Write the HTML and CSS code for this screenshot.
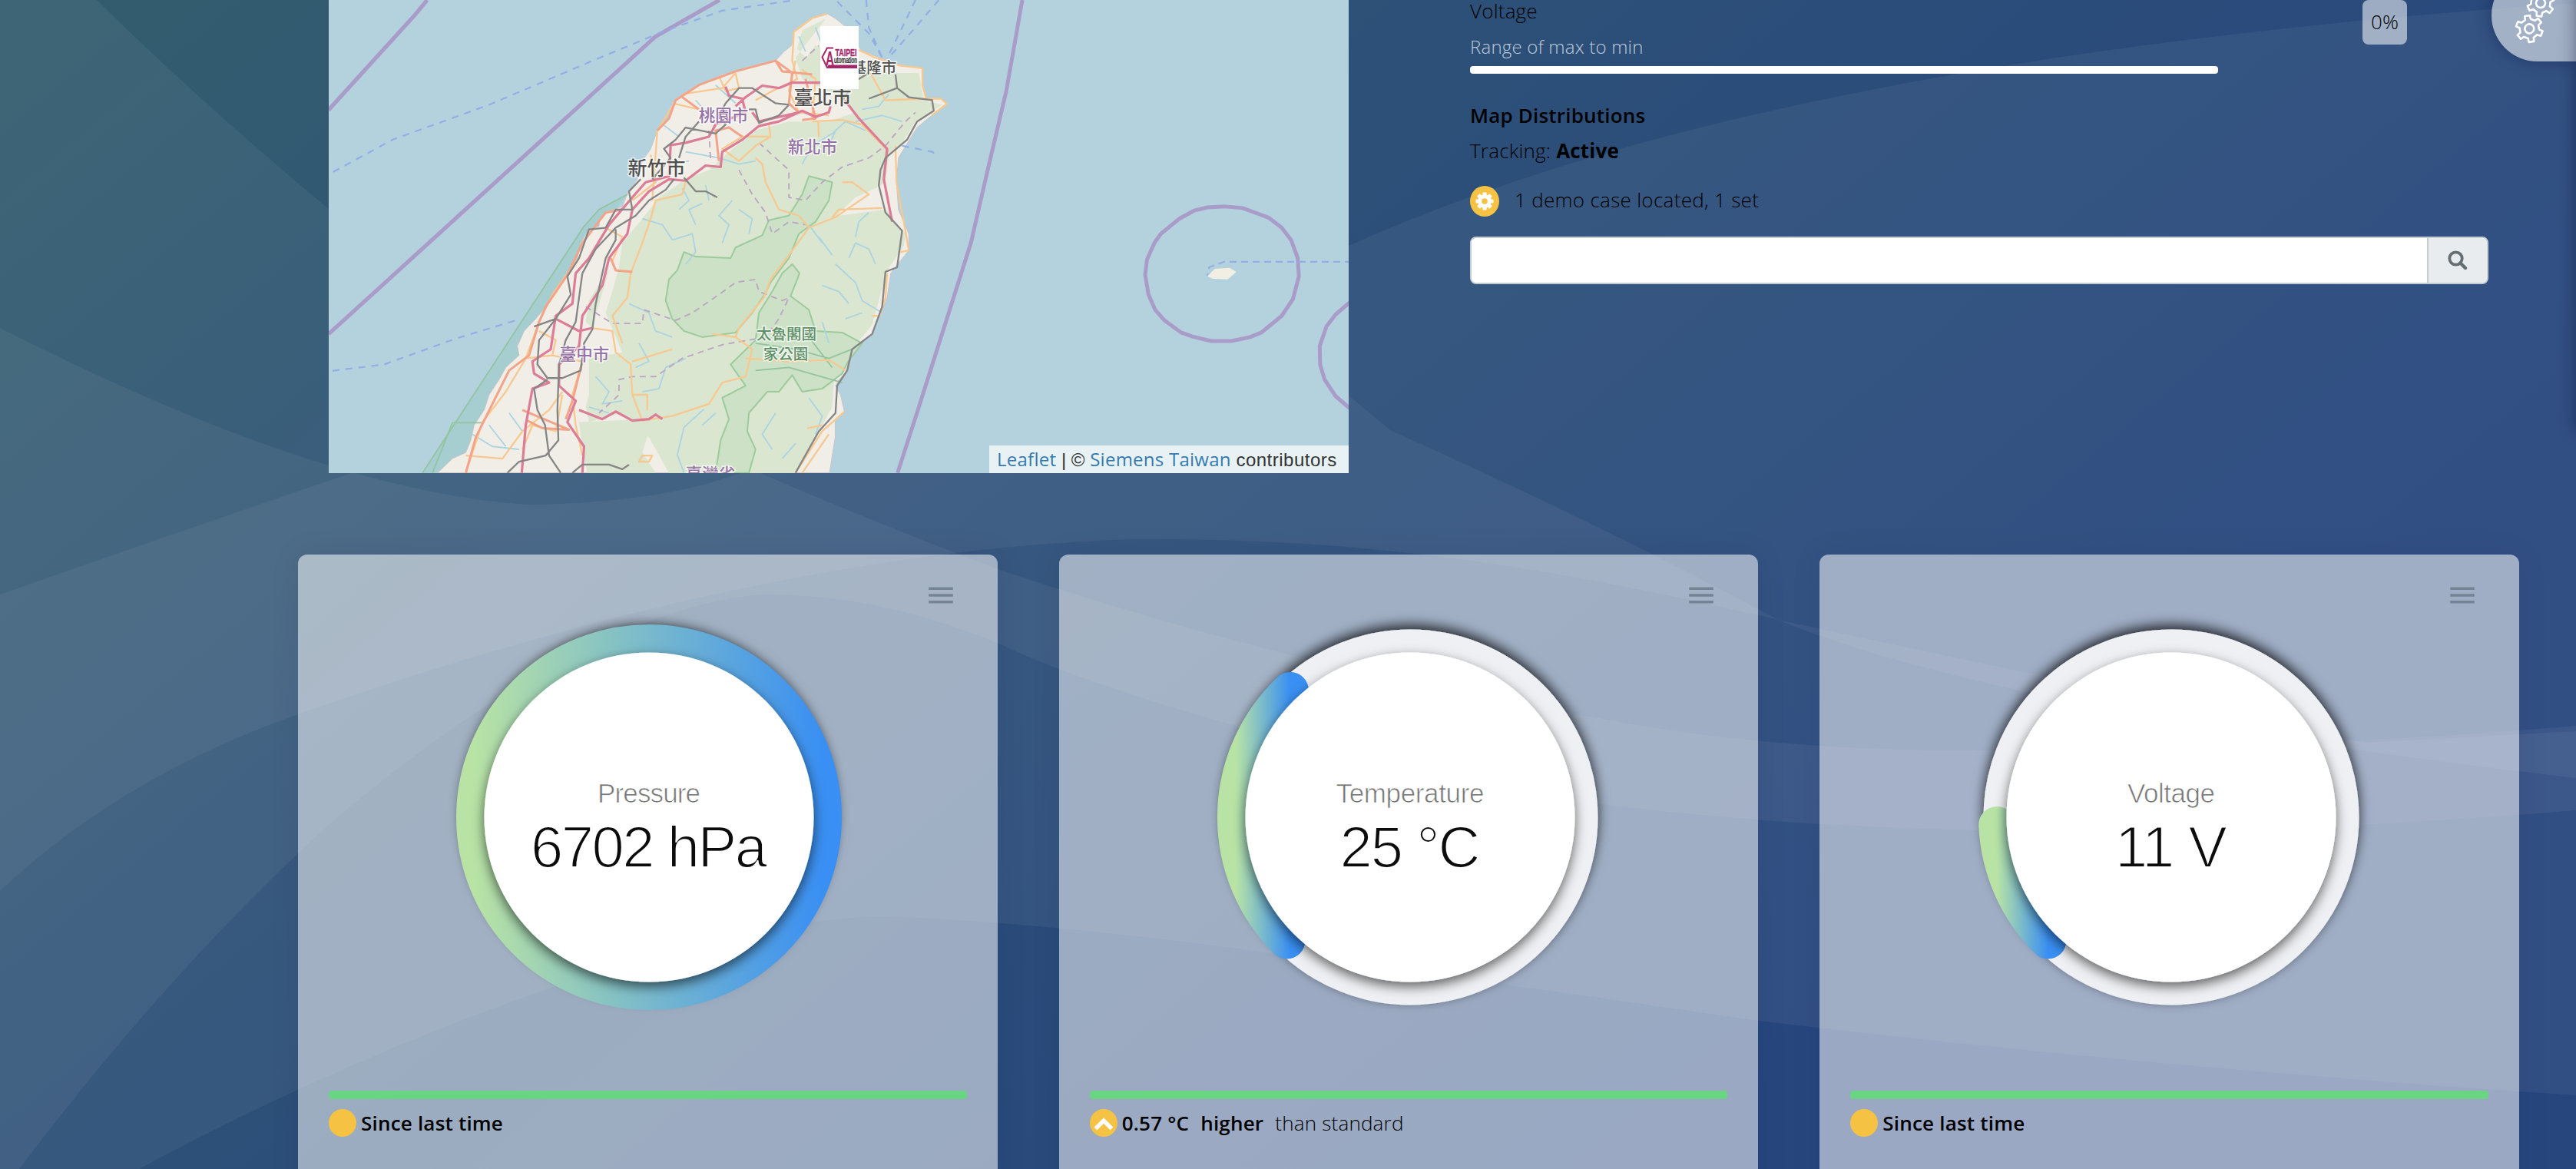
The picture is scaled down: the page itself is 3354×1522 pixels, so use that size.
FILE: index.html
```html
<!DOCTYPE html>
<html lang="en">
<head>
<meta charset="utf-8">
<title>Sensor Dashboard</title>
<link rel="stylesheet" href="styles.css">
</head>
<body>
<svg class="backdrop" viewBox="0 0 3354 1522" preserveAspectRatio="none" aria-hidden="true">
  <defs>
    <linearGradient id="bg" gradientUnits="userSpaceOnUse" x1="100" y1="0" x2="1700" y2="1920">
      <stop offset="0" stop-color="#335d6e"/><stop offset=".46" stop-color="#2d5078"/><stop offset="1" stop-color="#27467e"/>
    </linearGradient>
  </defs>
  <rect width="3354" height="1522" fill="url(#bg)"/>
  <g fill="#fff" fill-opacity=".052">
    <path d="M0 0H126Q260 132 428 272Q1000 640 1756 320Q2300 75 3354 4V1426Q2800 1390 2289 1329Q1800 1258 1654 1241Q1360 1200 1147 1193C900 1200 500 1350 181 1522H0Z"/>
    <path d="M0 427Q420 640 686 657Q860 655 963 616Q1400 380 1756 515L1810 560Q2100 690 2315 807Q2600 925 3354 1013V952L3080 967Q2640 877 2315 807C2050 745 1800 700 1484 702C1100 712 700 820 388 930Q160 1010 0 1160Z"/>
    <path d="M0 774Q240 690 428 626Q700 530 990 616Q1150 685 1305 743Q1684 870 2070 933Q2298 978 2575 977Q3000 975 3354 945V1055Q2900 1092 2579 1081Q2300 1075 2079 1046Q1800 1000 1598 942Q1400 885 1305 840Q1150 774 995 774C750 790 450 1050 388 1111Q200 1290 25 1522H0Z"/>
  </g>
</svg>

<main class="page">
  <section class="overview">
    <div class="map">
      <svg class="map-tiles" viewBox="0 0 1328 616">
        <rect width="1328" height="616" fill="#b3d2dd"/>
        <g transform="translate(-8 0) scale(.43367 .3954)" fill="none" stroke-linejoin="round" class="geo">
          <path d="M915 640L830 690L785 745L300 1557H430L600 1200L770 850Z" fill="#a6cdd0"/>
          <path fill="#f0eee6" stroke="#c9c4cc" stroke-width="1" d="M1515 45L1470 60L1415 100L1408 150L1385 170L1360 200L1240 235L1200 245L1130 280L1080 310L1050 345L1040 390L1005 430L985 490L960 530L945 590L915 640L900 680L860 695L832 720L830 745L800 755L775 800L765 850L735 905L700 950L670 1010L640 1050L605 1090L585 1140L590 1170L550 1210L530 1250L500 1300L485 1350L455 1400L445 1450L430 1490L390 1510L345 1557H1522L1539 1440L1539 1380L1567 1355L1555 1300L1540 1270L1550 1250L1578 1220L1583 1160L1650 1100L1673 1040L1695 980L1706 900L1734 860L1760 825L1760 770L1729 690L1723 600L1729 520L1751 480L1785 420L1829 380L1874 342L1857 325L1812 325L1801 280L1801 225L1729 215L1673 190L1617 165L1567 85L1539 60Z"/>
          <path fill="#dae6cf" d="M1510 62L1440 100L1425 160L1450 190L1480 150L1560 180L1620 220L1700 240L1790 240L1805 330L1860 345L1780 400L1735 480L1700 510L1690 600L1660 620L1600 650L1540 712L1690 690L1750 770L1745 810L1695 890L1650 1070L1560 1190L1535 1260L1530 1340L1500 1400L1420 1557H1040L980 1440L900 1360L800 1390L790 1340L800 1300L800 1180L900 1160L850 1030L870 960L890 880L900 800L960 720L1010 650L1090 590L1160 560L1220 500L1300 430L1400 400L1520 400L1600 370L1520 300L1440 260L1420 190Z"/>
          <path fill="#dae6cf" d="M770 1390L960 1380L980 1420L960 1490L1000 1557H795L780 1470ZM860 890L830 1000L810 1080L790 1060L800 990L850 900Z"/>
          <path fill="#cde1c6" stroke="#9ccb9b" stroke-width="2" d="M1085 830L1120 845L1225 850L1240 815L1320 775L1340 725L1400 710L1440 640L1460 580L1530 600L1520 660L1480 730L1430 770L1400 850L1345 930L1330 965L1290 1030L1240 1095L1140 1110L1085 1090L1050 1050L1030 990L1040 920L1065 890Z"/>
          <path fill="#cde1c6" stroke="#9ccb9b" stroke-width="2" d="M1410 870L1432 900L1405 975L1460 1020L1480 1090L1560 1095L1620 1130L1578 1190L1560 1230L1500 1280L1440 1290L1410 1235L1370 1290L1335 1290L1280 1360L1275 1420L1300 1480L1280 1557H1180L1195 1450L1220 1380L1200 1310L1270 1270L1225 1200L1300 1120L1310 1030L1350 960L1380 900Z"/>
          <path stroke="#93c4a0" stroke-width="1.8" d="M915 640L830 690L785 745L300 1557M330 1557L390 1392H480M1300 1220L1400 1210L1560 1260M1300 1130L1420 1150L1520 1180L1590 1150M1460 1110L1530 1210"/>
          <path stroke="#abd4e2" stroke-width="1.8" d="M960 720l60 20l30 50l60-20l10 60l-30 40M1120 740l-20-50l40-20M1200 800l20-60l-30-30l40-50M1250 690l40 30l-10 50M920 1000l60 30l20 60l50 20M950 1130l30 60l-40 20M1090 1180l-60 30l-20 70l-50 10M820 1240l40 50l-20 40l60-10M800 1340l60 20M1085 1557l-20-60l20-90l60-60M1140 1400l40-40M1350 1480l-30-50l40-70M450 1430l60 40l80 10M500 1400l50 70M560 1360l40 60M1540 870l60 60l20 60l60 40M1500 940l50 20l30 40M1580 850l20-50l40 20l20 50M1490 780l40 60M1600 780l10-50l30-30M1440 540l30-60l60-40l40-40l60 30M1520 480l20-50M1600 400l80-20l60 20M1620 360l50-10l30-40M1500 800l-40-60M1090 500l100 20l60 20l50-10M1040 540l60-10M1120 330l40 50M1180 280l60 60M1430 120l20 50M1480 90l20 60M1010 400l60 50M1460 1310l40 60l-20 60M1380 1510l40-50M1080 620l20 40l-30 30M1150 610l10 50M1570 1050l50-20M1500 1060l20 70"/>
          <path stroke="#bca3c4" stroke-width="1.8" stroke-dasharray="8 6" d="M790 1010L820 1030L870 1065L960 1065L965 1020L1060 1055L1110 1030L1190 970L1240 930L1300 920L1310 960L1380 990L1400 980L1370 1050L1330 1110L1200 1135L1080 1180L1000 1240L930 1240L890 1250L890 1300L830 1360M1160 430L1165 530M1250 560L1290 640L1330 700L1350 770L1400 730L1450 740M1310 470L1350 510L1400 560L1400 650L1450 660L1500 600L1560 550L1640 520L1690 480L1750 400L1780 370M1440 200L1490 150"/>
          <g stroke="#f7c88f" stroke-width="2.300">
            <path d="M1515 45L1470 60L1415 105L1410 200L1425 260L1350 300L1300 330M1240 240L1250 290L1210 300L1190 250M1080 310L1200 290L1240 240M1567 85L1600 160L1660 190L1729 215L1801 225L1801 280L1812 325L1690 330L1650 250L1617 210M1829 380L1874 342L1857 325L1812 325M1470 400L1560 395L1620 410L1700 500M1488 400L1490 450M1340 410L1345 450L1300 480L1250 530L1200 490L1260 450L1340 450M1300 520L1320 540L1330 600L1370 690L1430 710L1460 750L1540 715L1640 640L1590 600L1560 600M1530 715L1550 690L1680 685M1720 480L1723 600L1745 730L1760 825L1734 830M1460 750L1400 840L1345 920L1325 980L1250 1080L1240 1110L1290 1150L1270 1240L1200 1260L1160 1330L1050 1370L960 1385L930 1300L925 1200L880 1160L870 1090L810 1080M1170 1100L1240 1110M930 1190L1050 1150M930 1300H975V1350M1270 1180L1400 1190L1520 1185L1570 1220M1090 600L1080 640L1000 660L985 720L960 800L925 900L915 980L870 1040L900 1130M850 750L900 780L870 860M760 860L690 970L650 1060L610 1180L550 1290L480 1390L430 1557M610 1180L690 1170L700 1120L650 1090M690 1170L780 1190L750 1300L760 1400L780 1500M430 1500L540 1510L600 1420L680 1350L720 1290M720 1300L700 1420L630 1400L600 1480M1567 1355L1500 1420L1420 1557M1455 1410L1500 1400M960 1500l30 0l-10 20l-30 0z"/>
            <path d="M1695 900L1690 980L1673 1040L1650 1040M1440 1557L1520 1430M990 660L1005 430L1050 350M985 510L1000 600L930 660M1050 340L1130 360M1420 200L1400 300L1430 370L1520 380M1440 230L1480 260L1470 390"/>
          </g>
          <path stroke="#f3a488" stroke-width="3" d="M1005 430L1040 390L1060 330L1130 280L1240 235L1360 200L1410 240L1400 340L1430 370M1360 200L1380 235L1470 245M1080 320L1130 360M1450 260L1480 390L1440 395M900 690L850 700L780 800L735 905L670 1010L650 1060L620 1170L560 1220L510 1330L460 1440L430 1557M865 850L880 890L930 895M780 1190L750 1320L730 1380M1260 450L1220 420L1180 430L1190 530M615 1385L660 1410L740 1415L600 1350"/>
          <path stroke="#dd7c97" stroke-width="3.200" d="M1495 272H1410L1370 290L1320 282L1270 320L1240 350M1210 285L1220 315L1260 325L1270 370L1180 410L1160 450L1090 470L1045 478L1040 580L970 600L930 650L860 740L800 850L760 900L750 1000L700 1040L685 1150L630 1190L635 1230L680 1260L630 1280L610 1400L598 1557M1525 350L1520 370L1480 385L1440 365L1370 400L1310 415L1260 460L1200 500L1195 550L1150 545L1090 595L1040 590L980 630L930 690L915 770L860 850L840 940L780 1040L770 1140L710 1200L710 1270L760 1320L735 1390L785 1470L780 1557M700 1050L770 1090L810 1080M770 1350L840 1380L880 1355L930 1385L980 1380L1000 1365L1020 1380M1290 370L1310 400L1430 370M1568 330L1610 390L1695 490L1685 590L1710 730"/>
          <path stroke="#858585" stroke-width="2.300" d="M1400 345L1360 340L1290 290H1250L1210 340L1190 380L1210 410L1180 440L1090 420L1060 460L1025 490L1045 520L990 590M1130 400L1090 450L1070 520M1085 585L1120 630L1150 630L1185 650M1400 345L1370 380L1310 405L1300 360L1280 360M1055 590L1030 625L980 660L940 710L880 750L820 820L780 900L760 1060L730 1120L710 1200L705 1350L708 1450L670 1500L590 1520L555 1557M955 590L920 630L930 690L880 690L850 750L800 755L770 850L735 910L745 970L700 1050L650 1120L645 1200L675 1245H720L775 1220L785 1130L810 1085L820 1000L850 850L880 790V755M635 1075L700 1050M675 1250L635 1280L645 1350L668 1400L680 1500L715 1557M750 1557L780 1530L860 1530L900 1545L920 1530M1720 245L1725 290L1640 325M1725 290L1760 320L1830 330L1835 365L1785 400L1755 460L1690 520L1675 560L1670 610L1690 700L1740 760L1725 880L1690 895L1680 1010L1650 1100L1590 1150L1575 1220L1545 1270L1540 1360L1490 1420L1420 1557M1560 330L1580 300M1595 270L1640 240"/>
          <path stroke="#a99cc9" stroke-width="5.200" d="M18 362L275 52L314 0M18 1100L1000 120L1192 0"/>
          <path stroke="#93ade6" stroke-width="2.200" stroke-dasharray="9 8" d="M32 566L210 460L500 345L800 205L1020 105L1200 35L1420 0M30 1221L185 1200L400 1115L580 1055M1545 5L1640 110L1680 190M1632 0L1640 90L1680 190M1780 0L1745 80L1700 180M1850 0L1780 90L1700 190M1740 480L1830 500L1850 515"/>
        </g>
        <g transform="translate(572 0) scale(.48469 .3954)" fill="none" class="geo">
          <path d="M683 0L640 300L590 560L545 800L400 1360L348 1557M1228 680L1275 685L1345 717L1380 750L1405 790L1423 850L1426 910L1410 985L1380 1040L1325 1095L1295 1110L1245 1123H1190L1140 1108L1110 1095L1065 1055L1040 1020L1022 970L1013 905L1018 855L1038 800L1055 770L1105 720L1145 693L1180 683ZM1568 990L1525 1035L1500 1075L1482 1140L1483 1200L1495 1250L1525 1305L1568 1350" stroke="#a99cc9" stroke-width="5"/>
          <path d="M1568 862H1225L1185 880L1180 910" stroke="#93ade6" stroke-width="2.200" stroke-dasharray="9 6"/>
          <path d="M1180 910L1200 885L1240 882L1258 895L1235 920L1195 918Z" fill="#f1efe4"/>
        </g>
        <g class="place" text-anchor="middle">
          <text class="city" x="643" y="136" font-size="25">臺北市</text>
          <text class="city" x="427" y="228" font-size="25">新竹市</text>
          <text class="city" x="710" y="95" font-size="19.500">基隆市</text>
          <text class="county" x="514" y="158" font-size="21.500">桃園市</text>
          <text class="county" x="630" y="199" font-size="21.500">新北市</text>
          <text class="county" x="333" y="469" font-size="21.500">臺中市</text>
          <text class="county" x="497" y="625" font-size="21.500">臺灣省</text>
          <text class="park" x="596" y="442" font-size="19.500">太魯閣國</text>
          <text class="park" x="595" y="468" font-size="19.500">家公園</text>
        </g>
      </svg>
      <svg class="marker" viewBox="0 0 50 82">
        <rect width="50" height="82" fill="#fff"/>
        <path d="M17 28.500H9L2.500 40.500L9 54H48" fill="none" stroke="#a5276a" stroke-width="2"/>
        <path d="M10 50.500H48V55H9Z" fill="#a5276a"/>
        <text x="7" y="50.500" font-size="25" font-weight="700" textLength="11" lengthAdjust="spacingAndGlyphs" fill="#a5276a">A</text>
        <text x="19.500" y="38.500" font-size="13" font-weight="700" textLength="28" lengthAdjust="spacingAndGlyphs" fill="#a5276a" stroke="#a5276a" stroke-width=".4">TAIPEI</text>
        <text x="18" y="48" font-size="10" font-weight="400" textLength="30" lengthAdjust="spacingAndGlyphs" fill="#111" stroke="#111" stroke-width=".3">utomation</text>
      </svg>
      <div class="attribution"><a>Leaflet</a> | © <a>Siemens Taiwan</a> <span>contributors</span></div>
    </div>

    <div class="info">
      <div class="voltage-row">
        <div class="voltage">
          <p class="line">Voltage</p>
          <p class="hint">Range of max to min</p>
          <div class="range"></div>
        </div>
        <span class="badge">0%</span>
      </div>
      <h2 class="line title">Map Distributions</h2>
      <p class="line tracking">Tracking: <b>Active</b></p>
      <div class="located">
        <span class="cog"><svg viewBox="-12 -12 24 24"><g fill="#fff"><rect x="-2.600" y="-11.500" width="5.200" height="23" rx="1"/><rect x="-2.600" y="-11.500" width="5.200" height="23" rx="1" transform="rotate(45)"/><rect x="-2.600" y="-11.500" width="5.200" height="23" rx="1" transform="rotate(90)"/><rect x="-2.600" y="-11.500" width="5.200" height="23" rx="1" transform="rotate(135)"/><circle r="8.700"/></g><circle r="3.800" fill="#f5c243"/></svg></span>
        <p class="line">1 demo case located, 1 set</p>
      </div>
      <div class="search">
        <input class="search-input" type="text" aria-label="Search">
        <button class="search-button" aria-label="Search"><svg viewBox="0 0 26 26"><circle cx="10.500" cy="10.500" r="8.200" fill="none" stroke="#656e73" stroke-width="3.800"/><path d="M16.500 16.500L23 23" stroke="#656e73" stroke-width="4.400" stroke-linecap="round"/></svg></button>
      </div>
    </div>
  </section>

  <section class="cards">
    <article class="card">
      <svg class="menu" viewBox="0 0 24 24"><path d="M3 18h18v-2H3v2zm0-5h18v-2H3v2zm0-7v2h18V6H3z"/></svg>
      <svg class="gauge" viewBox="-290 -290 580 580">
        <defs>
          <linearGradient id="g1" gradientUnits="userSpaceOnUse" x1="-227" y1="0" x2="227" y2="0"><stop offset="0" stop-color="#b8e3a5"/><stop offset="1" stop-color="#398ff3"/></linearGradient>
          <filter id="up" x="-20%" y="-20%" width="140%" height="140%"><feDropShadow dx="0" dy="-6" stdDeviation="8" flood-color="#000" flood-opacity=".75"/></filter>
          <filter id="down" x="-20%" y="-20%" width="140%" height="140%"><feDropShadow dx="0" dy="6" stdDeviation="8" flood-color="#000" flood-opacity=".6"/></filter>
        </defs>
        <circle r="227" class="track"/>
        <circle r="227" fill="none" stroke="url(#g1)" stroke-width="48"/>
        <circle r="214.500" class="hollow"/>
        <text class="gauge-label" y="-19.500" textLength="134">Pressure</text>
        <text class="gauge-value" y="64.500" textLength="308">6702 hPa</text>
      </svg>
      <div class="rule"></div>
      <div class="note"><span class="dot"></span><b>Since last time</b></div>
    </article>
    <article class="card">
      <svg class="menu" viewBox="0 0 24 24"><path d="M3 18h18v-2H3v2zm0-5h18v-2H3v2zm0-7v2h18V6H3z"/></svg>
      <svg class="gauge" viewBox="-290 -290 580 580">
        <defs><linearGradient id="g2" gradientUnits="userSpaceOnUse" x1="-227" y1="0" x2="-156" y2="0"><stop offset="0" stop-color="#b8e3a5"/><stop offset="1" stop-color="#398ff3"/></linearGradient></defs>
        <circle r="227" class="track"/>
        <path d="M-160.500 160.500A227 227 0 0 1 -156 -165" class="arc" stroke="url(#g2)"/>
        <circle r="214.500" class="hollow"/>
        <text class="gauge-label" y="-19.500" textLength="193">Temperature</text>
        <text class="gauge-value" y="64.500" textLength="183">25 °C</text>
      </svg>
      <div class="rule"></div>
      <div class="note"><span class="dot"><svg viewBox="0 0 24 24"><path d="M5 17L12 10L19 17" fill="none" stroke="#fff" stroke-width="3.600"/></svg></span><b class="delta">0.57 °C</b><b class="delta">higher</b><span class="light">than standard</span></div>
    </article>
    <article class="card">
      <svg class="menu" viewBox="0 0 24 24"><path d="M3 18h18v-2H3v2zm0-5h18v-2H3v2zm0-7v2h18V6H3z"/></svg>
      <svg class="gauge" viewBox="-290 -290 580 580">
        <defs><linearGradient id="g3" gradientUnits="userSpaceOnUse" x1="-227" y1="0" x2="-160" y2="0"><stop offset="0" stop-color="#b8e3a5"/><stop offset="1" stop-color="#398ff3"/></linearGradient></defs>
        <circle r="227" class="track"/>
        <path d="M-160.500 160.500A227 227 0 0 1 -226.800 10" class="arc" stroke="url(#g3)"/>
        <circle r="214.500" class="hollow"/>
        <text class="gauge-label" y="-19.500" textLength="114">Voltage</text>
        <text class="gauge-value" y="64.500" textLength="146">11 V</text>
      </svg>
      <div class="rule"></div>
      <div class="note"><span class="dot"></span><b>Since last time</b></div>
    </article>
  </section>
</main>

<div class="settings">
  <svg viewBox="3244 -40 110 120"><g fill="none" stroke="#fff" stroke-width="2.600" stroke-linejoin="round">
    <g transform="translate(3293.300 37.400) rotate(21)"><path d="M12.200-3.700L17.200-3.300V3.300L12.200 3.700L9.300 8.700L11.500 13.200L5.700 16.500L2.900 12.400H-2.900L-5.700 16.500L-11.500 13.200L-9.300 8.700L-12.200 3.700L-17.200 3.300V-3.300L-12.200-3.700L-9.300-8.700L-11.500-13.200L-5.700-16.500L-2.900-12.400H2.900L5.700-16.500L11.500-13.200L9.300-8.700Z"/><circle r="6"/></g>
    <g transform="translate(3308 4) rotate(37)"><path d="M12.200-3.700L17.200-3.300V3.300L12.200 3.700L9.300 8.700L11.500 13.200L5.700 16.500L2.900 12.400H-2.900L-5.700 16.500L-11.500 13.200L-9.300 8.700L-12.200 3.700L-17.200 3.300V-3.300L-12.200-3.700L-9.300-8.700L-11.500-13.200L-5.700-16.500L-2.900-12.400H2.900L5.700-16.500L11.500-13.200L9.300-8.700Z"/><circle r="6"/></g>
  </g></svg>
</div>
<aside class="drawer"></aside>
</body>
</html>
```
FILE: styles.css
```css
* { box-sizing: border-box; }

body {
  margin: 0;
  height: 1522px;
  overflow: hidden;
  position: relative;
  background: #2f517c;
  color: #000;
  font-family: "Open Sans", "Noto Sans", sans-serif;
  font-size: 26px;
  letter-spacing: .2px;
}

p, h2 { margin: 0; }

.backdrop {
  position: absolute;
  inset: 0;
  width: 100%;
  height: 100%;
}

.page {
  position: relative;
  padding: 0 74px 0 388px;
  height: 1522px;
  overflow: hidden;
}

/* Map and side panel */
.overview {
  display: flex;
  gap: 158px;
  padding: 0 40px;
  height: 616px;
}

.map {
  position: relative;
  flex: none;
  width: 1328px;
  height: 616px;
  overflow: hidden;
  letter-spacing: 0;
}

.map-tiles { display: block; width: 1328px; height: 616px; }
.geo * { vector-effect: non-scaling-stroke; }

.place text {
  font-family: "Noto Sans CJK TC", sans-serif;
  paint-order: stroke;
  stroke: rgba(255, 255, 255, .7);
  stroke-width: 3px;
}
.city { fill: #4f4f4f; font-weight: 500; }
.county { fill: #9673a6; font-weight: 500; }
.park { fill: #5f9168; font-weight: 500; }

.marker {
  position: absolute;
  left: 640px;
  top: 34px;
  width: 50px;
  height: 82px;
  font-family: "Liberation Sans", Arial, sans-serif;
}

.attribution {
  position: absolute;
  right: 0;
  bottom: 0;
  width: 468px;
  height: 36px;
  padding-left: 10px;
  line-height: 35px;
  white-space: nowrap;
  background: rgba(255, 255, 255, .7);
  color: #333;
  font-size: 24px;
  font-family: "Liberation Sans", Arial, sans-serif;
}
.attribution a {
  color: #337ab0;
  font-family: "Open Sans", sans-serif;
  letter-spacing: .25px;
}
.attribution span { letter-spacing: .5px; }

.info { flex: none; width: 1326px; }

.voltage-row {
  display: flex;
  gap: 188px;
  height: 96px;
}
.voltage { width: 974px; margin-top: -4px; }

.line { line-height: 36px; font-weight: 300; }
.hint {
  margin-top: 11px;
  line-height: 36px;
  font-size: 24px;
  font-weight: 300;
  color: #bccadb;
}
.range {
  margin-top: 7px;
  height: 10px;
  border-radius: 4px;
  background: #fff;
}
.badge {
  width: 58px;
  height: 58px;
  border-radius: 8px;
  background: rgba(255, 255, 255, .54);
  text-align: center;
  line-height: 56px;
  font-weight: 300;
}
.title { margin-top: 36px; font-size: 26px; font-weight: 600; }
.tracking { margin-top: 10px; }
.tracking b { font-weight: 700; }

.located {
  display: flex;
  gap: 20px;
  margin-top: 28px;
  height: 40px;
}
.located .line { letter-spacing: .3px; }
.cog {
  display: flex;
  align-items: center;
  justify-content: center;
  width: 38px;
  height: 40px;
  border-radius: 50%;
  background: #f5c243;
}
.cog svg { width: 24px; height: 24px; }

.search {
  display: flex;
  margin-top: 26px;
  height: 62px;
  border: 2px solid #c3cdd3;
  border-radius: 8px;
  background: #fff;
  overflow: hidden;
}
.search-input { flex: 1; border: 0; background: #fff; }
.search-button {
  display: flex;
  align-items: center;
  justify-content: center;
  width: 78px;
  padding: 0;
  border: 0;
  border-left: 2px solid #c3cdd3;
  background: #e9ecef;
}
.search-button svg { width: 26px; height: 26px; }

/* Gauge cards */
.cards {
  display: flex;
  gap: 80px;
  margin-top: 106px;
}
.card {
  display: flex;
  flex: 1;
  flex-direction: column;
  height: 860px;
  padding: 0 40px;
  border-radius: 12px;
  background: rgba(255, 255, 255, .535);
  box-shadow: 0 0 40px rgba(0, 20, 60, .08);
}
.menu {
  align-self: flex-end;
  margin: 32px 13px 0 0;
  width: 42px;
  height: 42px;
  fill: #748494;
}
.gauge {
  align-self: center;
  width: 580px;
  height: 580px;
  margin-top: -22px;
  transform: translateX(2px);
  letter-spacing: 0;
}
.track {
  fill: none;
  stroke: #eff0f3;
  stroke-width: 35px;
  filter: url(#up);
}
.arc {
  fill: none;
  stroke-width: 48px;
  stroke-linecap: round;
}
.hollow { fill: #fff; filter: url(#down); }
.gauge-label, .gauge-value {
  font-family: "Liberation Sans", Arial, sans-serif;
  text-anchor: middle;
  stroke: #fff;
}
.gauge-label { font-size: 35px; fill: #777; stroke-width: .7px; }
.gauge-value { font-size: 76px; fill: #0c0c0c; stroke-width: 2px; }

.rule {
  margin-top: 66px;
  height: 11px;
  border-radius: 4px;
  background: #69d583;
}
.note {
  display: flex;
  align-items: center;
  margin-top: 13px;
  height: 36px;
  line-height: 32px;
  white-space: pre;
}
.note b { font-weight: 600; margin-left: 6px; }
.note .delta + .delta { margin-left: 15px; }
.note .light { margin-left: 15px; font-weight: 300; }
.dot {
  display: block;
  width: 36px;
  height: 36px;
  border-radius: 50%;
  background: #f5c243;
}
.dot svg { display: block; width: 36px; height: 36px; }

/* Floating settings tab and off-screen drawer */
.settings {
  position: absolute;
  right: 0;
  top: -40px;
  width: 110px;
  height: 120px;
  border-radius: 60px 0 0 60px;
  background: rgba(255, 255, 255, .55);
  box-shadow: 0 0 20px rgba(0, 10, 50, .35);
}
.settings svg { display: block; width: 110px; height: 120px; }
.drawer {
  position: absolute;
  right: -40px;
  top: -100px;
  width: 40px;
  height: 660px;
  box-shadow: 0 0 22px rgba(0, 10, 40, .45);
}
```
